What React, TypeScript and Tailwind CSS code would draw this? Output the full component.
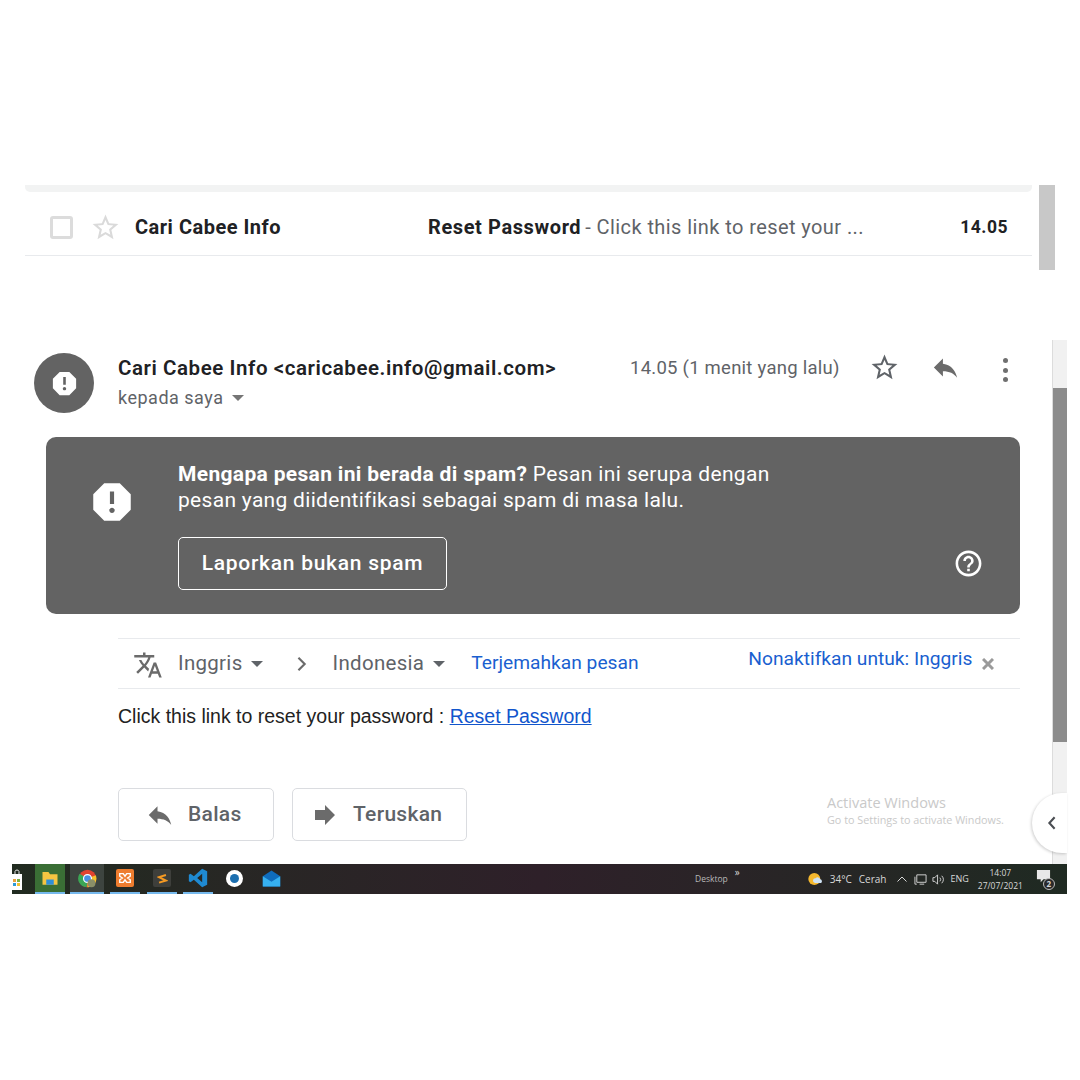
import type { ReactNode } from "react";

const Icon = ({ d, className }: { d: string; className: string }) => (
  <svg viewBox="0 0 24 24" fill="currentColor" className={className}>
    <path d={d} />
  </svg>
);

const STAR =
  "M22 9.24l-7.19-.62L12 2 9.19 8.63 2 9.24l5.46 4.73L5.82 21 12 17.27 18.18 21l-1.63-7.03L22 9.24zM12 15.4l-3.76 2.27 1-4.28-3.32-2.88 4.38-.38L12 6.1l1.71 4.04 4.38.38-3.32 2.88 1 4.28L12 15.4z";
const REPLY = "M10 9V5l-7 7 7 7v-4.1c5 0 8.5 1.6 11 5.1-1-5-4-10-11-11z";
const FORWARD = "M12 8V4l8 8-8 8v-4H4V8z";
const REPORT =
  "M15.73 3H8.27L3 8.27v7.46L8.27 21h7.46L21 15.73V8.27L15.73 3zM12 17.3c-.72 0-1.3-.58-1.3-1.3 0-.72.58-1.3 1.3-1.3.72 0 1.3.58 1.3 1.3 0 .72-.58 1.3-1.3 1.3zm1-4.3h-2V7h2v6z";
const HELP =
  "M11 18h2v-2h-2v2zm1-16C6.48 2 2 6.48 2 12s4.48 10 10 10 10-4.48 10-10S17.52 2 12 2zm0 18c-4.41 0-8-3.59-8-8s3.59-8 8-8 8 3.59 8 8-3.59 8-8 8zm0-14c-2.21 0-4 1.79-4 4h2c0-1.1.9-2 2-2s2 .9 2 2c0 2-3 1.75-3 5h2c0-2.25 3-2.5 3-5 0-2.21-1.79-4-4-4z";
const TRANSLATE =
  "M12.87 15.07l-2.54-2.51.03-.03c1.74-1.94 2.98-4.17 3.71-6.53H17V4h-7V2H8v2H1v1.99h11.17C11.5 7.92 10.44 9.75 9 11.35 8.07 10.32 7.3 9.19 6.69 8h-2c.73 1.63 1.73 3.17 2.98 4.56l-5.09 5.02L4 19l5-5 3.11 3.11.76-2.04zM18.5 10h-2L12 22h2l1.12-3h4.75L21 22h2l-4.5-12zm-2.62 7l1.62-4.33L19.12 17h-3.24z";

const Caret = ({ className }: { className: string }) => (
  <span className={`shrink-0 w-0 h-0 border-x-[6.5px] border-x-transparent border-t-[6.5px] ${className}`} />
);

function ListRow() {
  return (
    <div className="flex">
      <div className="w-[1007px] ml-[25px] pt-[185px]">
        <div className="h-[7px] bg-[#f2f3f3] rounded-b-[5px]" />
        <div className="h-[64px] flex items-center border-b border-[#e8eaed] text-[#202124] text-[20px] font-[family-name:Roboto] pt-[7px]">
          <span className="ml-[25px] w-[23px] h-[23px] border-[3px] border-[#dcdcdc] rounded-[3px]" />
          <Icon d={STAR} className="ml-[17px] w-[31px] h-[31px] text-[#dadada]" />
          <span className="ml-[14px] w-[293px] font-bold tracking-[0.5px]">Cari Cabee Info</span>
          <span className="font-bold tracking-[0.6px]">Reset Password</span>
          <span className="ml-[4px] text-[#5f6368] tracking-[0.42px]">- Click this link to reset your ...</span>
          <span className="ml-auto mr-[24px] text-[17.5px] font-bold tracking-[0.5px]">14.05</span>
        </div>
      </div>
      <div className="ml-[7px] mt-[185px] w-[16px] h-[85px] bg-[#c8c8c8]" />
    </div>
  );
}

function EmailHeader() {
  return (
    <div className="flex h-[97px] pt-[13px]">
      <div className="ml-[34px] w-[60px] h-[60px] rounded-full bg-[#636363] flex items-center justify-center">
        <Icon d={REPORT} className="w-[31px] h-[31px] text-white" />
      </div>
      <div className="ml-[24px] w-[512px] flex flex-col font-[family-name:Roboto]">
        <span className="text-[20.5px] leading-[30px] font-semibold text-[#202124] tracking-[0.57px] whitespace-nowrap">
          Cari Cabee Info &lt;caricabee.info@gmail.com&gt;
        </span>
        <span className="mt-[1px] flex items-center text-[18px] leading-[27px] text-[#5f6368] tracking-[0.5px]">
          kepada saya
          <Caret className="ml-[9px] border-t-[#757575]" />
        </span>
      </div>
      <span className="w-[209px] text-[18.5px] leading-[30px] text-[#5f6368] tracking-[0.25px] font-[family-name:Roboto] whitespace-nowrap">
        14.05 (1 menit yang lalu)
      </span>
      <Icon d={STAR} className="ml-[30px] mt-[-1px] w-[31px] h-[31px] text-[#5f6368]" />
      <Icon d={REPLY} className="ml-[30px] mt-[-1px] w-[31px] h-[31px] text-[#6b6b6b]" />
      <div className="ml-[42px] mt-[5px] flex flex-col gap-[4.500px]">
        <span className="w-[5px] h-[5px] rounded-full bg-[#6f6f6f]" />
        <span className="w-[5px] h-[5px] rounded-full bg-[#6f6f6f]" />
        <span className="w-[5px] h-[5px] rounded-full bg-[#6f6f6f]" />
      </div>
    </div>
  );
}

function SpamBanner() {
  return (
    <div className="ml-[46px] w-[974px] h-[177px] rounded-[10px] bg-[#636363] flex text-white font-[family-name:Roboto]">
      <Icon d={REPORT} className="ml-[41px] mt-[40px] w-[50px] h-[50px]" />
      <div className="ml-[41px] pt-[24px] flex flex-col items-start">
        <p className="text-[21px] leading-[26px] tracking-[0.35px] w-[640px]">
          <span className="font-bold tracking-[0.33px]">Mengapa pesan ini berada di spam?</span> Pesan ini serupa dengan
          <br />
          <span className="tracking-[0.3px]">pesan yang diidentifikasi sebagai spam di masa lalu.</span>
        </p>
        <div className="mt-[24px] w-[269px] h-[53px] border border-white rounded-[5px] flex items-center justify-center text-[21px] font-medium tracking-[0.72px]">
          Laporkan bukan spam
        </div>
      </div>
      <Icon d={HELP} className="ml-[135px] mt-[111px] w-[31px] h-[31px]" />
    </div>
  );
}

function TranslateBar() {
  return (
    <div className="ml-[118px] mt-[24px] w-[902px] h-[51px] border-y border-[#e8eaed] flex items-center text-[20.5px] font-[family-name:Roboto] text-[#5f6368] tracking-[0.3px] whitespace-nowrap">
      <Icon d={TRANSLATE} className="shrink-0 ml-[15px] w-[30px] h-[30px] mt-[2px] text-[#6b6b6b]" />
      <span className="ml-[15px]">Inggris</span>
      <Caret className="ml-[8px] border-t-[#5f6368]" />
      <svg viewBox="0 0 12 18" className="shrink-0 ml-[33px] w-[12px] h-[16px]" fill="none" stroke="#6b6b6b" strokeWidth="2.4">
        <path d="M2 2l7 7-7 7" />
      </svg>
      <span className="ml-[25px]">Indonesia</span>
      <Caret className="ml-[9px] border-t-[#5f6368]" />
      <span className="ml-[26px] w-[277px] text-[19.2px] tracking-normal text-[#1a5fd0]">Terjemahkan pesan</span>
      <span className="mb-[9px] text-[19.2px] tracking-normal text-[#1a5fd0] w-[234px]">Nonaktifkan untuk: Inggris</span>
      <svg viewBox="0 0 12 12" className="shrink-0 w-[12px] h-[12px]" stroke="#9a9a9a" strokeWidth="3">
        <path d="M1 1l10 10M11 1L1 11" />
      </svg>
    </div>
  );
}

const ActionButton = ({ icon, label, className }: { icon: string; label: string; className: string }) => (
  <div className={`h-[53px] border border-[#dadce0] rounded-[5px] flex items-center text-[#5f6368] font-[family-name:Roboto] font-medium text-[21px] tracking-[0.3px] ${className}`}>
    <Icon d={icon} className="w-[30px] h-[30px] text-[#6b6b6b]" />
    {label}
  </div>
);

function EmailPanel() {
  return (
    <div className="flex mt-[70px] h-[524px]">
      <div className="w-[1052px] relative">
        <EmailHeader />
        <SpamBanner />
        <TranslateBar />
        <p className="ml-[118px] mt-[13px] text-[19.5px] leading-[28px] text-[#222222] font-[family-name:'Liberation_Sans']">
          Click this link to reset your password :{" "}
          <span className="text-[#1155cc] underline">Reset Password</span>
        </p>
        <div className="ml-[118px] mt-[58px] flex gap-[18px]">
          <ActionButton icon={REPLY} label="Balas" className="w-[156px] pl-[26px] gap-[13px]" />
          <ActionButton icon={FORWARD} label="Teruskan" className="w-[175px] pl-[17px] gap-[13px]" />
        </div>
        <div className="absolute left-[827px] top-[453px] font-[family-name:'Open_Sans'] text-[#c9c9c9]">
          <p className="text-[14.5px] leading-[20px]">Activate Windows</p>
          <p className="text-[10.8px] leading-[14px] whitespace-nowrap">Go to Settings to activate Windows.</p>
        </div>
        <div className="absolute left-[1032px] top-[453px] w-[35px] h-[60px] rounded-l-[30px] bg-white shadow-[-1px_1px_3px_rgba(0,0,0,0.18)] z-10 flex items-center pl-[15px]">
          <svg viewBox="0 0 10 16" className="w-[10px] h-[14px]" fill="none" stroke="#4a4d52" strokeWidth="2.4">
            <path d="M8 1.5L2 8l6 6.5" />
          </svg>
        </div>
      </div>
      <div className="w-[15px] h-full bg-[#f1f1f1] border-l border-[#dcdcdc] pt-[48px]">
        <div className="h-[354px] bg-[#8c8c8c]" />
      </div>
    </div>
  );
}

const TaskSlot = ({ children, className = "", bar = true }: { children: ReactNode; className?: string; bar?: boolean }) => (
  <div className={`w-[30px] h-[30px] flex items-center justify-center border-b-2 ${bar ? "border-[#76b9ed]" : "border-transparent"} ${className}`}>
    {children}
  </div>
);

function Taskbar() {
  return (
    <div className="ml-[12px] w-[1055px] h-[30px] flex items-center bg-gradient-to-r from-[#212b20] via-[#2e2029] to-[#1f2a22] text-[#d8d8d8] font-[family-name:'Open_Sans'] whitespace-nowrap">
      <svg viewBox="0 0 10 21" className="shrink-0 w-[10px] h-[21px] mt-[1px]">
        <path d="M3 5V2.500A2 2 0 0 1 5 1a2 2 0 0 1 2 1.500V5" fill="none" stroke="#e8e8e8" strokeWidth="1" />
        <path d="M0 5h10v16H0z" fill="#ffffff" />
        <path d="M1 10h3v3H1z" fill="#e8a33d" />
        <path d="M5 10h3v3H5z" fill="#7cb342" />
        <path d="M1 14h3v3H1z" fill="#2f9bd8" />
        <path d="M5 14h3v3H5z" fill="#f2c230" />
      </svg>
      <TaskSlot className="ml-[13px] bg-[#3a6e35] border-[#3fae3a]">
        <svg viewBox="0 0 24 24" className="w-[18px] h-[18px]">
          <path d="M2 4h8l2 3h10v14H2z" fill="#f5c542" />
          <path d="M7 14h10v7H7z" fill="#2f8fd8" />
        </svg>
      </TaskSlot>
      <TaskSlot className="ml-[5px] w-[34px] bg-[#3d443f]">
        <svg viewBox="0 0 24 24" className="w-[19px] h-[19px]">
          <circle cx="12" cy="12" r="11" fill="#e2432f" />
          <path d="M12 12L22.500 8A11 11 0 0 1 12 23z" fill="#f6c22c" />
          <path d="M12 12l-1 11A11 11 0 0 1 2 6z" fill="#3aa655" />
          <circle cx="12" cy="12" r="5" fill="#4a90e2" stroke="#fff" strokeWidth="1.500" />
          <circle cx="17" cy="18" r="5" fill="#8a8f68" />
        </svg>
      </TaskSlot>
      <TaskSlot className="ml-[6px]">
        <span className="w-[18px] h-[18px] rounded-[2px] bg-[#ee7d2f] flex items-center justify-center">
          <svg viewBox="0 0 16 16" className="w-[14px] h-[14px]" fill="none" stroke="#fff" strokeWidth="1.600">
            <path d="M2 3h4l2 3 2-3h4v3l-3 2 3 2v3h-4l-2-3-2 3H2v-3l3-2-3-2z" />
          </svg>
        </span>
      </TaskSlot>
      <TaskSlot className="ml-[7px]">
        <span className="w-[18px] h-[18px] rounded-[2px] bg-[#3e3f3b] flex items-center justify-center">
          <svg viewBox="0 0 16 16" className="w-[11px] h-[11px]" fill="none" stroke="#f59a23" strokeWidth="3">
            <path d="M13 3L3 6l10 5-10 3" />
          </svg>
        </span>
      </TaskSlot>
      <TaskSlot className="ml-[6px]">
        <svg viewBox="0 0 24 24" className="w-[20px] h-[20px]" fill="#1f8ad2">
          <path d="M17 1l6 3v16l-6 3-10-9-4 3-2-1V8l2-1 4 3zm0 6l-6 5 6 5z" />
        </svg>
      </TaskSlot>
      <TaskSlot className="ml-[6px]" bar={false}>
        <span className="w-[17px] h-[17px] rounded-full bg-white flex items-center justify-center">
          <span className="w-[9px] h-[9px] rounded-full bg-[#1c6fb0]" />
        </span>
      </TaskSlot>
      <TaskSlot className="ml-[7px]" bar={false}>
        <svg viewBox="0 0 24 24" className="w-[19px] h-[19px]">
          <path d="M1 9l11-7 11 7v13H1z" fill="#0f6cbd" />
          <path d="M1 9l11 7 11-7v13H1z" fill="#36b0f0" />
        </svg>
      </TaskSlot>
      <span className="ml-[409px] text-[8.500px] text-[#b9b9b9]">Desktop</span>
      <span className="ml-[7px] mb-[14px] text-[10px] leading-none">»</span>
      <svg viewBox="0 0 24 24" className="ml-[67px] w-[16px] h-[16px]">
        <circle cx="11" cy="12" r="9" fill="#f5b82e" />
        <path d="M12 18a3.500 3.500 0 0 1 1-7 4 4 0 0 1 7 1.500 3 3 0 0 1 1 5.500z" fill="#cfe3f5" />
      </svg>
      <span className="ml-[7px] text-[10px]">34°C</span>
      <span className="ml-[7px] text-[10px]">Cerah</span>
      <svg viewBox="0 0 10 6" className="ml-[10px] w-[10px] h-[6px]" fill="none" stroke="#d8d8d8" strokeWidth="1">
        <path d="M0.500 5.500L5 1l4.500 4.500" />
      </svg>
      <svg viewBox="0 0 14 14" className="ml-[7px] w-[13px] h-[13px]" fill="none" stroke="#d8d8d8" strokeWidth="1">
        <path d="M3 2h10v8H3zM6 12h5M1 4v8h2" />
      </svg>
      <svg viewBox="0 0 14 14" className="ml-[5px] w-[13px] h-[13px]" fill="none" stroke="#d8d8d8" strokeWidth="1">
        <path d="M1 5v4h2l3 3V2L3 5zM8.500 5a3 3 0 0 1 0 4M10.500 3a6 6 0 0 1 0 8" />
      </svg>
      <span className="ml-[6px] text-[9px]">ENG</span>
      <div className="ml-[10px] flex flex-col items-center text-[8.500px] leading-[13px] w-[43px]">
        <span>14:07</span>
        <span>27/07/2021</span>
      </div>
      <div className="ml-[14px] relative w-[18px] h-[20px]">
        <svg viewBox="0 0 16 16" className="w-[15px] h-[15px]" fill="#e8e8e8">
          <path d="M1 1h14v10H8l-3 3v-3H1z" />
        </svg>
        <span className="absolute right-[-1px] bottom-[-1px] w-[12px] h-[12px] rounded-full bg-[#2a2a2a] border border-[#bbbbbb] text-[8px] leading-[10px] text-center font-bold">2</span>
      </div>
    </div>
  );
}

export default function App() {
  return (
    <main className="w-[1080px] h-[1080px] bg-white overflow-hidden">
      <ListRow />
      <EmailPanel />
      <Taskbar />
    </main>
  );
}
